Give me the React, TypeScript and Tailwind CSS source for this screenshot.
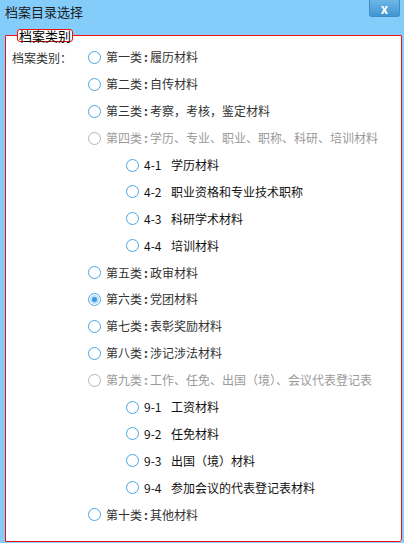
import React from 'react';

type Item = { label: string; checked?: boolean; disabled?: boolean; sub?: boolean };

const items: Item[] = [
  { label: '第一类：履历材料' },
  { label: '第二类：自传材料' },
  { label: '第三类：考察，考核，鉴定材料' },
  { label: '第四类：学历、专业、职业、职称、科研、培训材料', disabled: true },
  { label: '4-1|学历材料', sub: true },
  { label: '4-2|职业资格和专业技术职称', sub: true },
  { label: '4-3|科研学术材料', sub: true },
  { label: '4-4|培训材料', sub: true },
  { label: '第五类：政审材料' },
  { label: '第六类：党团材料', checked: true },
  { label: '第七类：表彰奖励材料' },
  { label: '第八类：涉记涉法材料' },
  { label: '第九类：工作、任免、出国（境）、会议代表登记表', disabled: true },
  { label: '9-1|工资材料', sub: true },
  { label: '9-2|任免材料', sub: true },
  { label: '9-3|出国（境）材料', sub: true },
  { label: '9-4|参加会议的代表登记表材料', sub: true },
  { label: '第十类：其他材料' },
];

function Radio({ checked, disabled }: { checked?: boolean; disabled?: boolean }) {
  return (
    <span
      className={
        'flex h-[13px] w-[13px] shrink-0 items-center justify-center rounded-full border bg-white ' +
        (disabled ? 'border-[#b5b5b5]' : 'border-[#47a6e6]')
      }
    >
      {checked && <span className="h-[5px] w-[5px] rounded-full bg-[#3c98dc] shadow-[0_0_0_2px_#bcdff7]" />}
    </span>
  );
}

function Row({ item }: { item: Item }) {
  if (item.sub) {
    const [code, text] = item.label.split('|');
    return (
      <div className="flex h-[26.9px] items-center pl-[38px] text-[#111]">
        <Radio />
        <span className="ml-[5px] w-[27px]">{code}</span>
        <span>{text}</span>
      </div>
    );
  }
  const [head, rest] = item.label.split('：');
  return (
    <div className={'flex h-[26.9px] items-center ' + (item.disabled ? 'text-[#9a9a9a]' : 'text-[#333]')}>
      <Radio checked={item.checked} disabled={item.disabled} />
      <span className="ml-[5px] whitespace-nowrap">
        {head}
        <span className="mx-[2px] font-bold">:</span>
        {rest}
      </span>
    </div>
  );
}

export default function App() {
  return (
    <div
      className="h-[543px] w-[404px] overflow-hidden bg-[#84cdfb] text-[12px]"
      style={{ fontFamily: '"Noto Sans CJK SC", "Noto Sans", sans-serif' }}
    >
      <div className="flex h-[29px] items-start justify-between">
        <span className="ml-[5px] mt-[3px] text-[13px] leading-[18px] text-[#1c1c1c]">档案目录选择</span>
        <div className="mr-[4px] flex h-[17px] w-[31px] items-center justify-center rounded-b-[3px] border border-t-0 border-[#3f8bc4] bg-gradient-to-b from-[#6cb7e6] to-[#4096d2] text-[13px] font-bold leading-[15px] text-white">
          x
        </div>
      </div>
      <fieldset className="ml-[5px] h-[513px] w-[397px] rounded-br-[3px] border border-[#ee1111] bg-white pl-[6px]">
        <legend className="ml-[5px] h-[13px] rounded-[3px] border border-[#ee1111] bg-white px-[1px] text-[13px] leading-[11px] text-black">
          档案类别
        </legend>
        <div className="flex pt-[2px]">
          <div className="flex h-[27px] w-[76px] shrink-0 items-center text-[#333]">档案类别：</div>
          <div className="flex flex-col">
            {items.map((it, i) => (
              <Row key={i} item={it} />
            ))}
          </div>
        </div>
      </fieldset>
    </div>
  );
}
